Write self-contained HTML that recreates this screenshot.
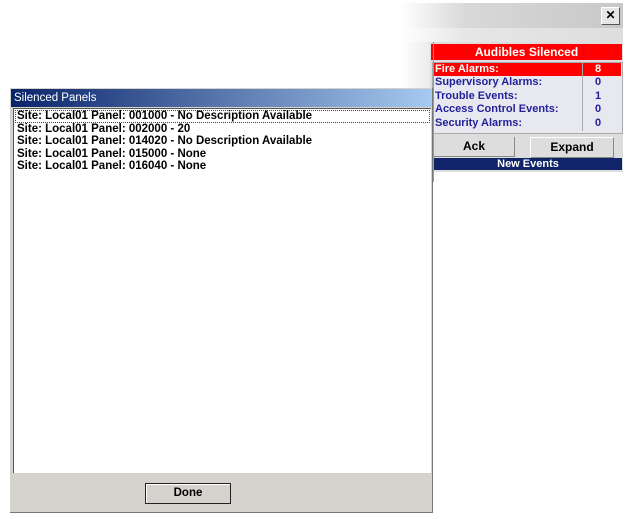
<!DOCTYPE html>
<html><head><style>
body{margin:0;width:627px;height:519px;background:#fff;position:relative;overflow:hidden;font-family:"Liberation Sans",Arial,sans-serif}
.a{position:absolute}
</style></head><body>
<!-- alarm window -->
<div class="a" style="left:400px;top:3px;width:223px;height:25px;background:linear-gradient(to right,#fff 0%,#d8d8d8 30%,#c8c8c8 100%)"></div>
<div class="a" style="left:400px;top:28px;width:223px;height:14px;background:linear-gradient(to right,#fff 0%,#e6e6e6 30%,#dedede 100%)"></div>
<div class="a" style="left:400px;top:42px;width:30px;height:130px;background:linear-gradient(to right,#fff,#ececec)"></div>
<div class="a" style="left:601px;top:7px;width:17px;height:16px;background:#e6e6e6;border:1px solid #fff;border-right-color:#555;border-bottom-color:#555;font-weight:bold;font-size:12px;line-height:15px;text-align:center">✕</div>
<div class="a" style="left:430px;top:42px;width:193px;height:130px;background:#ddd"></div>
<div class="a" style="left:431px;top:44px;width:191px;height:16px;background:#f00;color:#fff;font-weight:bold;font-size:12px;line-height:16px;text-align:center">Audibles Silenced</div>
<div class="a" style="left:432px;top:62px;width:189px;height:70px;background:#e8e8f0;border:1px solid #aaa"></div>
<div class="a" style="left:433px;top:63px;width:188px;height:13px;background:#f00"></div>
<div class="a" style="left:582px;top:63px;width:1px;height:68px;background:#aaa"></div>
<div class="a" style="left:435px;top:63px;font-size:11px;line-height:13.4px;color:#22229a;font-weight:bold">
<div style="color:#fff">Fire Alarms:</div><div>Supervisory Alarms:</div><div>Trouble Events:</div><div>Access Control Events:</div><div>Security Alarms:</div></div>
<div class="a" style="left:595px;top:63px;font-size:11px;line-height:13.4px;color:#22229a;font-weight:bold">
<div style="color:#fff">8</div><div>0</div><div>1</div><div>0</div><div>0</div></div>
<div class="a" style="left:434px;top:137px;width:80px;height:19px;background:#ddd;border-right:1px solid #888;border-bottom:1px solid #888;font-size:12px;font-weight:bold;line-height:19px;text-align:center">Ack</div>
<div class="a" style="left:530px;top:137px;width:82px;height:19px;background:#ddd;border:1px solid #fff;border-right-color:#888;border-bottom-color:#888;font-size:12px;font-weight:bold;line-height:19px;text-align:center">Expand</div>
<div class="a" style="left:434px;top:158px;width:188px;height:12px;background:#10246a;color:#fff;font-size:11px;font-weight:bold;line-height:12px;text-align:center">New Events</div>
<div class="a" style="left:433px;top:42px;width:1px;height:140px;background:#999"></div>
<!-- dialog -->
<div class="a" style="left:10px;top:88px;width:422px;height:424px;background:#d6d3ce;border-right:1px solid #777;border-bottom:1px solid #777"></div>
<div class="a" style="left:11px;top:89px;width:421px;height:18px;background:linear-gradient(to right,#0a246a,#a6caf0);color:#fff;font-size:11.5px;line-height:18px;padding-left:3px;box-sizing:border-box">Silenced Panels</div>
<div class="a" style="left:13px;top:108px;width:418px;height:365px;background:#fff;border-left:1px solid #555;border-top:1px solid #555;box-sizing:border-box"></div>
<div class="a" style="left:15px;top:110px;width:415px;height:13px;border:1px dotted #444;box-sizing:border-box"></div>
<div class="a" style="left:17px;top:110px;font-size:11.5px;font-weight:bold;line-height:12.6px;color:#000">
<div>Site: Local01 Panel: 001000 - No Description Available</div>
<div>Site: Local01 Panel: 002000 - 20</div>
<div>Site: Local01 Panel: 014020 - No Description Available</div>
<div>Site: Local01 Panel: 015000 - None</div>
<div>Site: Local01 Panel: 016040 - None</div></div>
<div class="a" style="left:145px;top:483px;width:84px;height:19px;border:1px solid #222;background:#d6d3ce;box-shadow:inset 1px 1px #fff;font-size:11.5px;font-weight:bold;line-height:19px;text-align:center">Done</div>
</body></html>
